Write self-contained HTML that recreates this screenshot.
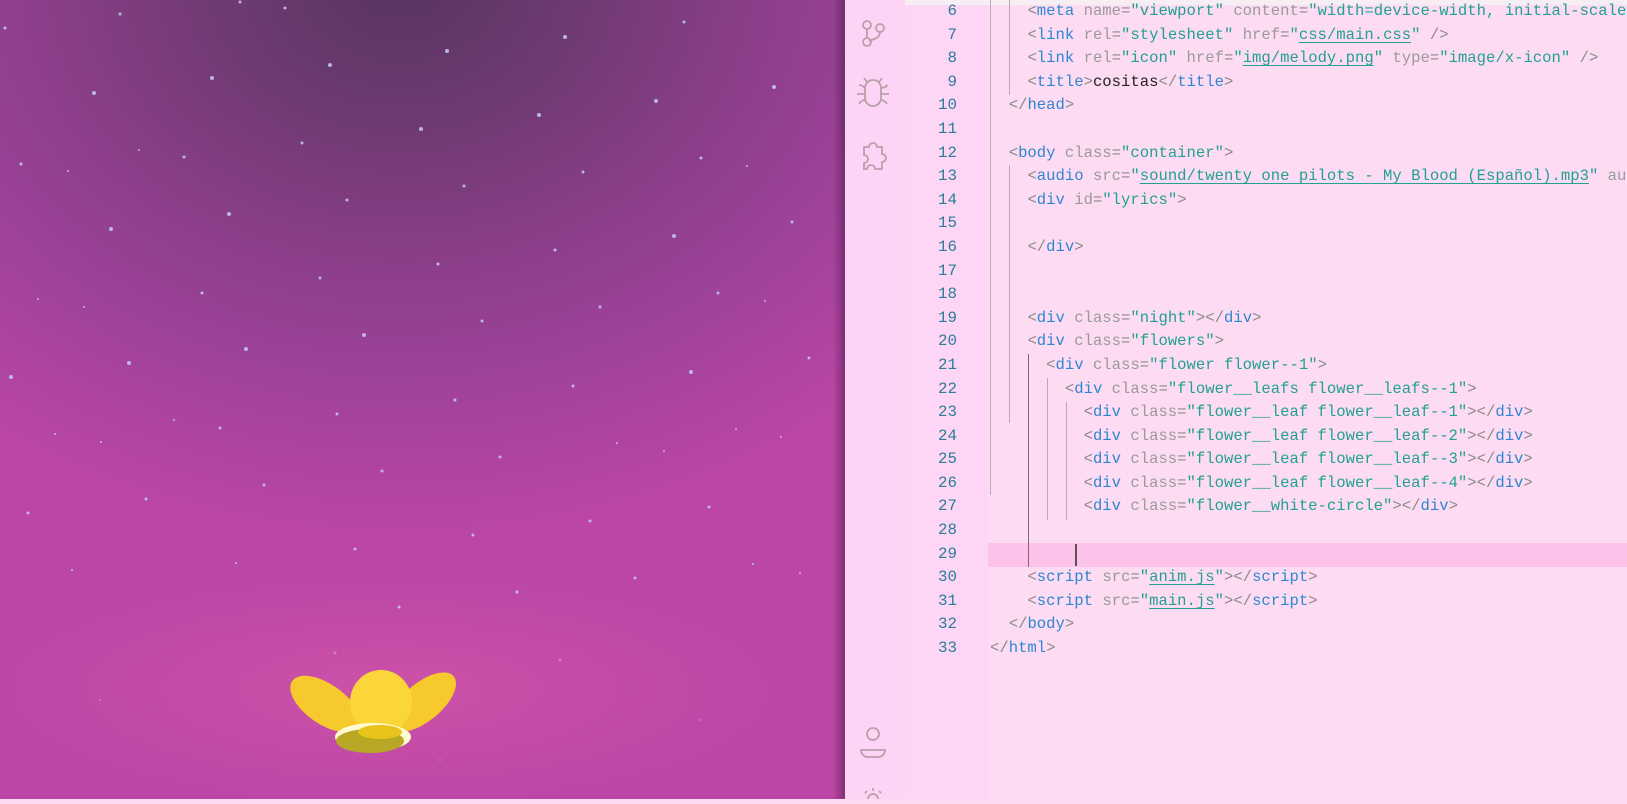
<!DOCTYPE html>
<html><head><meta charset="utf-8">
<style>
*{margin:0;padding:0;box-sizing:border-box}
body{width:1627px;height:799px;overflow:hidden;position:relative;background:#fddcf3;font-family:"Liberation Mono",monospace}
#left{position:absolute;left:0;top:0;width:845px;height:799px;
background:radial-gradient(ellipse 420px 120px at 390px 690px,rgba(225,95,170,.45),rgba(225,95,170,0)),
radial-gradient(ellipse 700px 560px at 400px -20px,#573560 0%,#6e3a72 25%,#8a3e88 50%,#a2429b 75%,#bb46a6 100%);}
#left:after{content:"";position:absolute;right:0;top:0;width:12px;height:100%;background:linear-gradient(90deg,rgba(60,20,60,0),rgba(60,20,60,.45))}
#act{position:absolute;left:845px;top:0;width:60px;height:799px;background:#fdd3f6}
#gut{position:absolute;left:905px;top:0;width:83px;height:799px;background:#fdd5f5}
#topbar{position:absolute;left:905px;top:0;width:722px;height:5px;background:#f7eef4}
.ln{position:absolute;left:905px;top:0;width:52px;text-align:right;font-size:15.8px;line-height:23.6px;color:#2b7d98}
#code{position:absolute;left:990px;top:0;font-size:15.6px;line-height:23.6px;white-space:pre;color:#222}
.p{color:#8a8a8a}.t{color:#2e86d0}.a{color:#9a9a9a}.s{color:#22a092}.u{text-decoration:underline;text-underline-offset:3px}
.g{position:absolute;width:1px;background:#b9a9b4}
</style></head><body>
<div id="left">
<svg width="845" height="799" style="position:absolute;left:0;top:0">
<g fill="#c2cdf3" opacity=".85">
<circle cx="120" cy="14" r="1.5"/><circle cx="285" cy="8" r="1.5"/><circle cx="330" cy="65" r="2"/><circle cx="212" cy="78" r="2"/><circle cx="94" cy="93" r="2"/><circle cx="447" cy="51" r="2"/><circle cx="565" cy="37" r="2"/><circle cx="684" cy="22" r="1.5"/><circle cx="774" cy="87" r="2"/><circle cx="656" cy="101" r="2"/><circle cx="539" cy="115" r="2"/><circle cx="421" cy="129" r="2"/><circle cx="302" cy="143" r="1.5"/><circle cx="583" cy="172" r="1.5"/><circle cx="464" cy="186" r="1.5"/><circle cx="347" cy="200" r="1.5"/><circle cx="229" cy="214" r="2"/><circle cx="111" cy="229" r="2"/><circle cx="674" cy="236" r="2"/><circle cx="555" cy="250" r="1.5"/><circle cx="438" cy="264" r="1.5"/><circle cx="320" cy="278" r="1.5"/><circle cx="202" cy="293" r="1.5"/><circle cx="718" cy="293" r="1.5"/><circle cx="600" cy="307" r="1.5"/><circle cx="482" cy="321" r="1.5"/><circle cx="364" cy="335" r="2"/><circle cx="246" cy="349" r="2"/><circle cx="129" cy="363" r="2"/><circle cx="11" cy="377" r="2"/><circle cx="691" cy="372" r="2"/><circle cx="573" cy="386" r="1.5"/><circle cx="455" cy="400" r="1.5"/><circle cx="337" cy="414" r="1.5"/><circle cx="220" cy="428" r="1.5"/><circle cx="382" cy="471" r="1.5"/><circle cx="264" cy="485" r="1.5"/><circle cx="146" cy="499" r="1.5"/><circle cx="28" cy="513" r="1.5"/><circle cx="709" cy="507" r="1.5"/><circle cx="590" cy="521" r="1.5"/><circle cx="473" cy="535" r="1.5"/><circle cx="355" cy="549" r="1.5"/><circle cx="792" cy="222" r="1.5"/><circle cx="809" cy="358" r="1.5"/><circle cx="399" cy="607" r="1.5"/><circle cx="517" cy="592" r="1.5"/><circle cx="635" cy="578" r="1.5"/><circle cx="21" cy="164" r="1.5"/><circle cx="68" cy="171" r="1"/><circle cx="139" cy="150" r="1"/><circle cx="184" cy="157" r="1.5"/><circle cx="701" cy="158" r="1.5"/><circle cx="747" cy="166" r="1"/><circle cx="765" cy="301" r="1"/><circle cx="38" cy="299" r="1"/><circle cx="84" cy="307" r="1"/><circle cx="174" cy="420" r="1"/><circle cx="55" cy="434" r="1"/><circle cx="101" cy="442" r="1"/><circle cx="500" cy="457" r="1.5"/><circle cx="617" cy="443" r="1"/><circle cx="664" cy="451" r="1"/><circle cx="736" cy="429" r="1"/><circle cx="781" cy="437" r="1"/><circle cx="236" cy="563" r="1"/><circle cx="72" cy="570" r="1"/><circle cx="753" cy="564" r="1"/><circle cx="800" cy="573" r="1"/><circle cx="5" cy="28" r="1.5"/><circle cx="240" cy="2" r="1.5"/>
</g>
<g opacity=".4" fill="#e0c8f0"><circle cx="560" cy="660" r="1.5"/><circle cx="335" cy="653" r="1.5"/><circle cx="100" cy="700" r="1"/><circle cx="700" cy="720" r="1"/><circle cx="440" cy="760" r="1"/></g>
<g>
<ellipse cx="325" cy="704" rx="40" ry="20" transform="rotate(35 325 704)" fill="#f6c92c"/>
<ellipse cx="423" cy="702" rx="40" ry="19" transform="rotate(-40 423 702)" fill="#f6c92c"/>
<ellipse cx="381" cy="702" rx="31" ry="32" fill="#fad63a"/>
<ellipse cx="373" cy="737" rx="38" ry="14" fill="#fefbd0"/>
<ellipse cx="370" cy="741" rx="34" ry="12" fill="#b8a826"/>
<ellipse cx="380" cy="732" rx="22" ry="7" fill="#e8c31a"/>
</g>
</svg>
</div>
<div id="act">
<svg width="60" height="799" fill="none" stroke="#b9a0a8" stroke-width="1.8">
<circle cx="22" cy="25" r="4"/><circle cx="22" cy="42" r="4"/><circle cx="35" cy="28" r="4"/><path d="M22 29v9M35 32c0 6-6 7-11 9"/>
<path d="M20 88a8 8 0 0 1 16 0v10a8 8 0 0 1-16 0z M22 82l-3-4M34 82l3-4M14 85c2 0 4 1 6 3M42 85c-2 0 4 1-6 3M12 94h8M36 94h8M14 104c2-3 4-4 6-4M42 104c-2-3-4-4-6-4"/>
<path d="M19 147h5a4 4 0 1 1 8 0h5v7a4 4 0 1 1 0 8v7h-7a4 4 0 1 0-8 0h-3v-6a4 4 0 1 0 0-8z"/>
<circle cx="28" cy="734" r="6"/><path d="M16 750h24a7 7 0 0 1-7 7h-10a7 7 0 0 1-7-7z"/>
<circle cx="28" cy="799" r="5"/><path d="M20 793l2-2M36 793l-2-2M28 788v3"/>
</svg>
</div>
<div id="gut"></div>
<div id="topbar"></div>
<div style="position:absolute;left:988px;top:543px;width:639px;height:24px;background:#fdc2ea"></div>
<div class="g" style="left:990px;top:0;height:495px"></div>
<div class="g" style="left:1009px;top:0;height:95px"></div>
<div class="g" style="left:1009px;top:165px;height:258px"></div>
<div class="g" style="left:1028px;top:354px;height:213px;background:#7a6a74"></div>
<div class="g" style="left:1047px;top:378px;height:142px"></div>
<div class="g" style="left:1066px;top:402px;height:118px"></div>
<div style="position:absolute;left:1075px;top:544px;width:2px;height:22px;background:#555"></div>
<div class="ln">6<br>7<br>8<br>9<br>10<br>11<br>12<br>13<br>14<br>15<br>16<br>17<br>18<br>19<br>20<br>21<br>22<br>23<br>24<br>25<br>26<br>27<br>28<br>29<br>30<br>31<br>32<br>33</div>
<div id="code">    <span class="p">&lt;</span><span class="t">meta</span> <span class="a">name</span><span class="p">=</span><span class="s">"viewport"</span> <span class="a">content</span><span class="p">=</span><span class="s">"width=device-width, initial-scale=1.0"</span> <span class="p">/&gt;</span>
    <span class="p">&lt;</span><span class="t">link</span> <span class="a">rel</span><span class="p">=</span><span class="s">"stylesheet"</span> <span class="a">href</span><span class="p">=</span><span class="s">"<span class="u">css/main.css</span>"</span> <span class="p">/&gt;</span>
    <span class="p">&lt;</span><span class="t">link</span> <span class="a">rel</span><span class="p">=</span><span class="s">"icon"</span> <span class="a">href</span><span class="p">=</span><span class="s">"<span class="u">img/melody.png</span>"</span> <span class="a">type</span><span class="p">=</span><span class="s">"image/x-icon"</span> <span class="p">/&gt;</span>
    <span class="p">&lt;</span><span class="t">title</span><span class="p">&gt;</span>cositas<span class="p">&lt;/</span><span class="t">title</span><span class="p">&gt;</span>
  <span class="p">&lt;/</span><span class="t">head</span><span class="p">&gt;</span>

  <span class="p">&lt;</span><span class="t">body</span> <span class="a">class</span><span class="p">=</span><span class="s">"container"</span><span class="p">&gt;</span>
    <span class="p">&lt;</span><span class="t">audio</span> <span class="a">src</span><span class="p">=</span><span class="s">"<span class="u">sound/twenty one pilots - My Blood (Español).mp3</span>"</span> <span class="a">autoplay</span>
    <span class="p">&lt;</span><span class="t">div</span> <span class="a">id</span><span class="p">=</span><span class="s">"lyrics"</span><span class="p">&gt;</span>

    <span class="p">&lt;/</span><span class="t">div</span><span class="p">&gt;</span>


    <span class="p">&lt;</span><span class="t">div</span> <span class="a">class</span><span class="p">=</span><span class="s">"night"</span><span class="p">&gt;&lt;/</span><span class="t">div</span><span class="p">&gt;</span>
    <span class="p">&lt;</span><span class="t">div</span> <span class="a">class</span><span class="p">=</span><span class="s">"flowers"</span><span class="p">&gt;</span>
      <span class="p">&lt;</span><span class="t">div</span> <span class="a">class</span><span class="p">=</span><span class="s">"flower flower--1"</span><span class="p">&gt;</span>
        <span class="p">&lt;</span><span class="t">div</span> <span class="a">class</span><span class="p">=</span><span class="s">"flower__leafs flower__leafs--1"</span><span class="p">&gt;</span>
          <span class="p">&lt;</span><span class="t">div</span> <span class="a">class</span><span class="p">=</span><span class="s">"flower__leaf flower__leaf--1"</span><span class="p">&gt;&lt;/</span><span class="t">div</span><span class="p">&gt;</span>
          <span class="p">&lt;</span><span class="t">div</span> <span class="a">class</span><span class="p">=</span><span class="s">"flower__leaf flower__leaf--2"</span><span class="p">&gt;&lt;/</span><span class="t">div</span><span class="p">&gt;</span>
          <span class="p">&lt;</span><span class="t">div</span> <span class="a">class</span><span class="p">=</span><span class="s">"flower__leaf flower__leaf--3"</span><span class="p">&gt;&lt;/</span><span class="t">div</span><span class="p">&gt;</span>
          <span class="p">&lt;</span><span class="t">div</span> <span class="a">class</span><span class="p">=</span><span class="s">"flower__leaf flower__leaf--4"</span><span class="p">&gt;&lt;/</span><span class="t">div</span><span class="p">&gt;</span>
          <span class="p">&lt;</span><span class="t">div</span> <span class="a">class</span><span class="p">=</span><span class="s">"flower__white-circle"</span><span class="p">&gt;&lt;/</span><span class="t">div</span><span class="p">&gt;</span>


    <span class="p">&lt;</span><span class="t">script</span> <span class="a">src</span><span class="p">=</span><span class="s">"<span class="u">anim.js</span>"</span><span class="p">&gt;&lt;/</span><span class="t">script</span><span class="p">&gt;</span>
    <span class="p">&lt;</span><span class="t">script</span> <span class="a">src</span><span class="p">=</span><span class="s">"<span class="u">main.js</span>"</span><span class="p">&gt;&lt;/</span><span class="t">script</span><span class="p">&gt;</span>
  <span class="p">&lt;/</span><span class="t">body</span><span class="p">&gt;</span>
<span class="p">&lt;/</span><span class="t">html</span><span class="p">&gt;</span></div>
</body></html>
